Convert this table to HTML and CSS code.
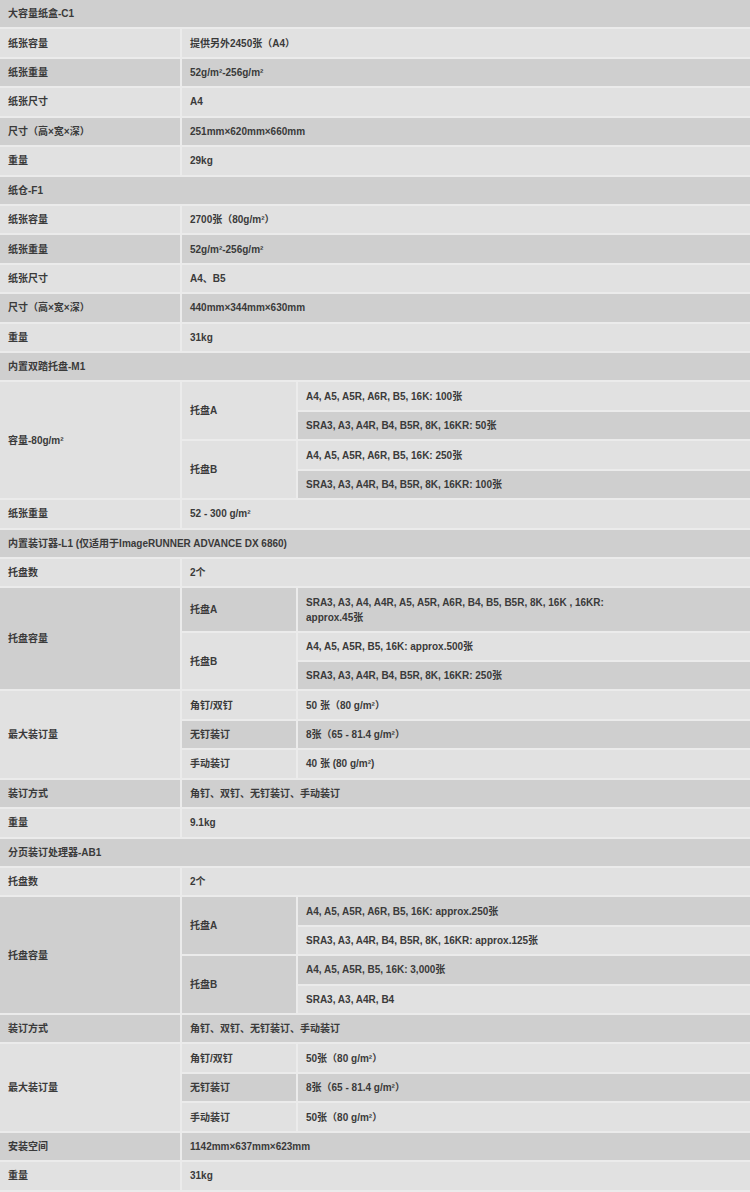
FILE: index.html
```html
<!DOCTYPE html>
<html lang="zh-CN">
<head>
<meta charset="utf-8">
<title>规格</title>
<link rel="stylesheet" href="styles.css">
</head>
<body>
<table class="spec">
<colgroup><col class="c1"><col class="c2"><col class="c3"></colgroup>
<tbody>
<tr class="sec"><td colspan="3">大容量纸盒-C1</td></tr>
<tr><td>纸张容量</td><td colspan="2">提供另外2450张（A4）</td></tr>
<tr><td>纸张重量</td><td colspan="2">52g/m²-256g/m²</td></tr>
<tr><td>纸张尺寸</td><td colspan="2">A4</td></tr>
<tr><td>尺寸（高×宽×深）</td><td colspan="2">251mm×620mm×660mm</td></tr>
<tr><td>重量</td><td colspan="2">29kg</td></tr>
<tr class="sec"><td colspan="3">纸仓-F1</td></tr>
<tr><td>纸张容量</td><td colspan="2">2700张（80g/m²）</td></tr>
<tr><td>纸张重量</td><td colspan="2">52g/m²-256g/m²</td></tr>
<tr><td>纸张尺寸</td><td colspan="2">A4、B5</td></tr>
<tr><td>尺寸（高×宽×深）</td><td colspan="2">440mm×344mm×630mm</td></tr>
<tr><td>重量</td><td colspan="2">31kg</td></tr>
<tr class="sec"><td colspan="3">内置双踏托盘-M1</td></tr>
<tr><td rowspan="4">容量-80g/m²</td><td rowspan="2">托盘A</td><td>A4, A5, A5R, A6R, B5, 16K: 100张</td></tr>
<tr><td>SRA3, A3, A4R, B4, B5R, 8K, 16KR: 50张</td></tr>
<tr><td rowspan="2">托盘B</td><td>A4, A5, A5R, A6R, B5, 16K: 250张</td></tr>
<tr><td>SRA3, A3, A4R, B4, B5R, 8K, 16KR: 100张</td></tr>
<tr><td>纸张重量</td><td colspan="2">52 - 300 g/m²</td></tr>
<tr class="sec"><td colspan="3">内置装订器-L1 (仅适用于ImageRUNNER ADVANCE DX 6860)</td></tr>
<tr><td>托盘数</td><td colspan="2">2个</td></tr>
<tr class="tall"><td rowspan="3">托盘容量</td><td>托盘A</td><td>SRA3, A3, A4, A4R, A5, A5R, A6R, B4, B5, B5R, 8K, 16K , 16KR:<br>approx.45张</td></tr>
<tr><td rowspan="2">托盘B</td><td>A4, A5, A5R, B5, 16K: approx.500张</td></tr>
<tr><td>SRA3, A3, A4R, B4, B5R, 8K, 16KR: 250张</td></tr>
<tr><td rowspan="3">最大装订量</td><td>角钉/双钉</td><td>50 张（80 g/m²）</td></tr>
<tr><td>无钉装订</td><td>8张（65 - 81.4 g/m²）</td></tr>
<tr><td>手动装订</td><td>40 张 (80 g/m²)</td></tr>
<tr><td>装订方式</td><td colspan="2">角钉、双钉、无钉装订、手动装订</td></tr>
<tr><td>重量</td><td colspan="2">9.1kg</td></tr>
<tr class="sec"><td colspan="3">分页装订处理器-AB1</td></tr>
<tr><td>托盘数</td><td colspan="2">2个</td></tr>
<tr><td rowspan="4">托盘容量</td><td rowspan="2">托盘A</td><td>A4, A5, A5R, A6R, B5, 16K: approx.250张</td></tr>
<tr><td>SRA3, A3, A4R, B4, B5R, 8K, 16KR: approx.125张</td></tr>
<tr><td rowspan="2">托盘B</td><td>A4, A5, A5R, B5, 16K: 3,000张</td></tr>
<tr><td>SRA3, A3, A4R, B4</td></tr>
<tr><td>装订方式</td><td colspan="2">角钉、双钉、无钉装订、手动装订</td></tr>
<tr><td rowspan="3">最大装订量</td><td>角钉/双钉</td><td>50张（80 g/m²）</td></tr>
<tr><td>无钉装订</td><td>8张（65 - 81.4 g/m²）</td></tr>
<tr><td>手动装订</td><td>50张（80 g/m²）</td></tr>
<tr><td>安装空间</td><td colspan="2">1142mm×637mm×623mm</td></tr>
<tr><td>重量</td><td colspan="2">31kg</td></tr>
</tbody>
</table>
</body>
</html>
```

FILE: styles.css
```css
html, body {
  margin: 0;
  padding: 0;
  background: #e1e1e1;
}
.spec {
  width: 750px;
  table-layout: fixed;
  border-collapse: separate;
  border-spacing: 0;
  font-family: "Liberation Sans", "Noto Sans CJK SC", sans-serif;
  font-size: 10px;
  font-weight: bold;
  color: #3a3a3a;
}
.c1 { width: 182px; }
.c2 { width: 116px; }
.spec tr { height: 29.43px; }
.spec tr.tall { height: 44.15px; }
.spec td {
  padding: 0 8px;
  line-height: 15px;
  vertical-align: middle;
  border-bottom: 2px solid #ebebeb;
  border-right: 2px solid #ebebeb;
  white-space: nowrap;
}
.spec td:last-child { border-right: 0; }
.spec tr:nth-child(odd) td { background: #cfcfcf; }
.spec tr:nth-child(even) td { background: #e1e1e1; }
.spec tr.sec td { border-right: 0; }
```
